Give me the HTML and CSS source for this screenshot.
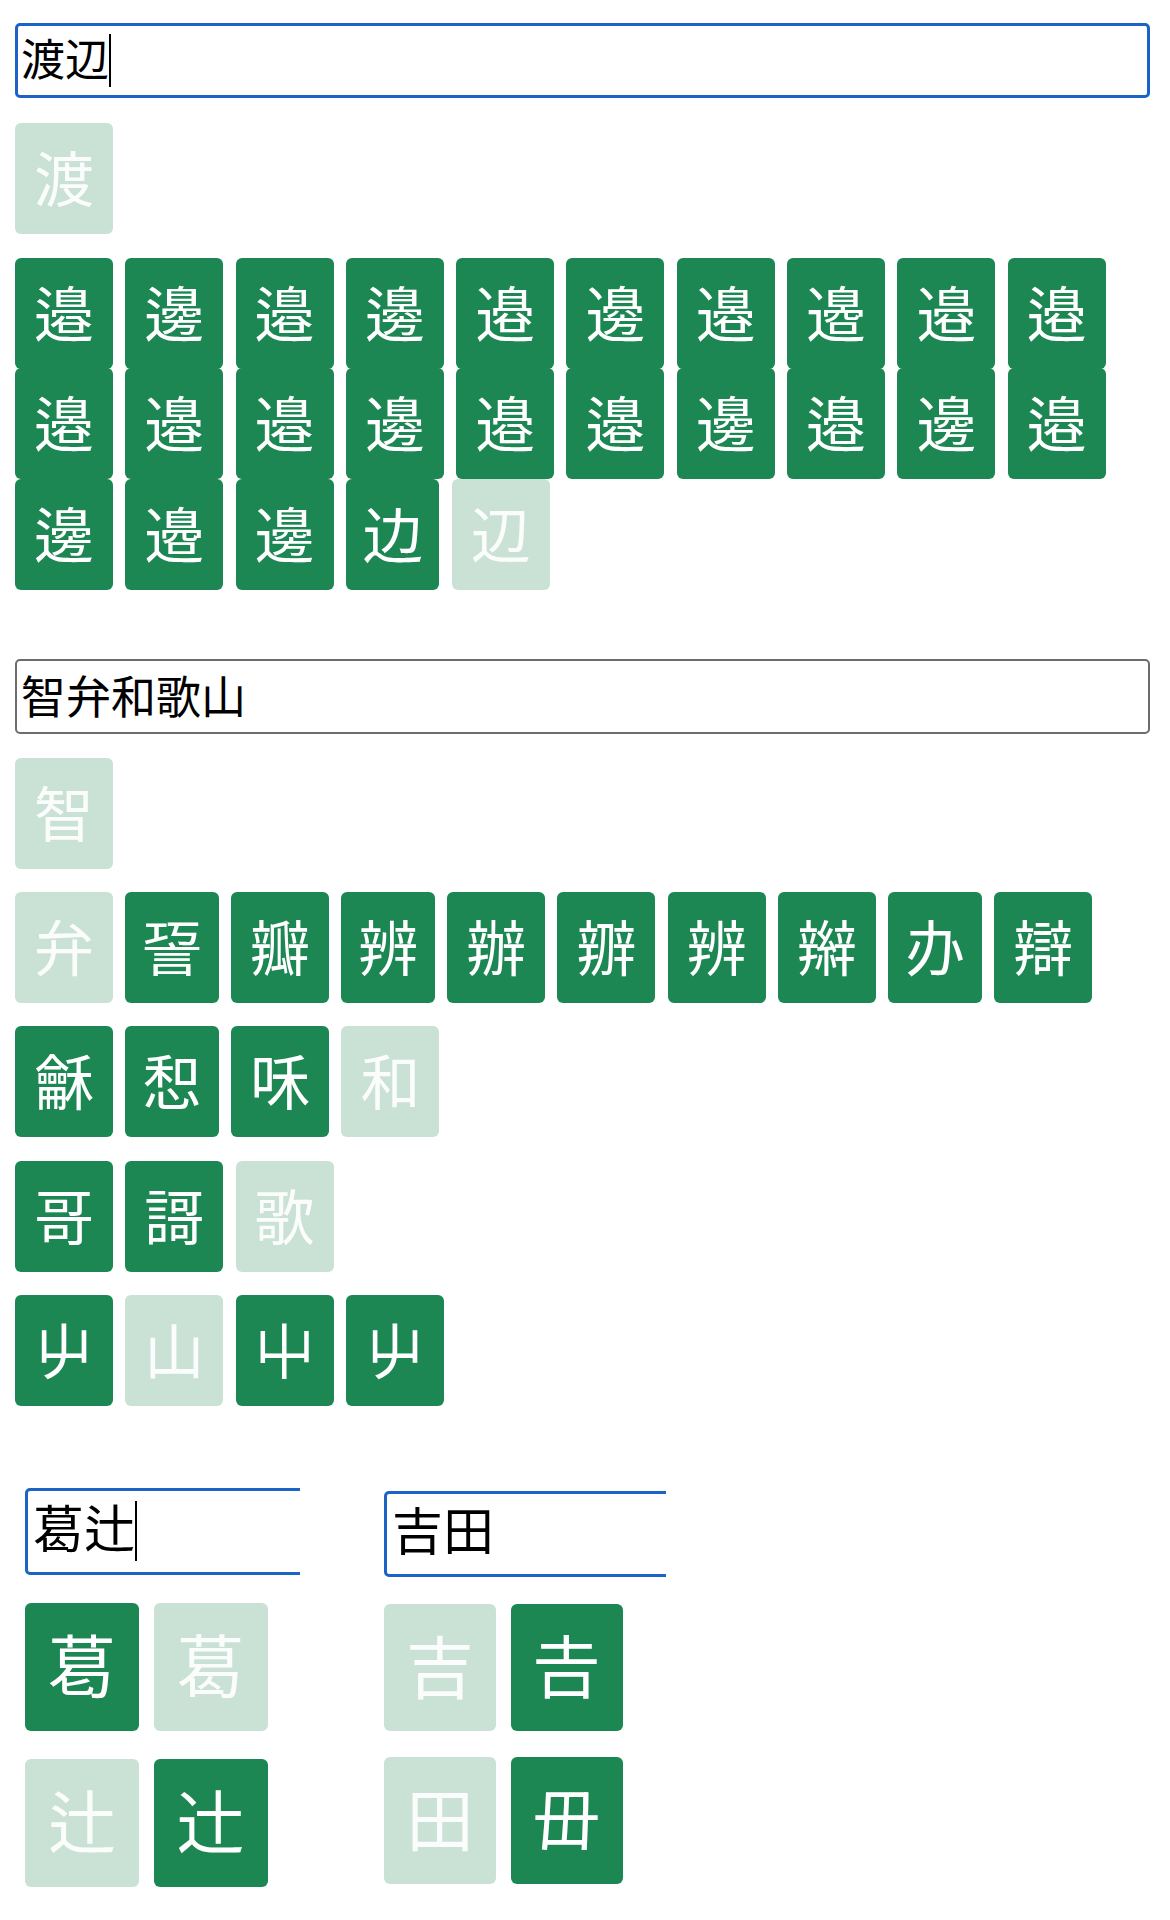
FILE: index.html
```html
<!DOCTYPE html>
<html lang="ja">
<head>
<meta charset="utf-8">
<title>異体字</title>
<link rel="stylesheet" href="styles.css">
</head>
<body>
<div class="page">
  <section class="sec s1">
    <div class="field focus"><span class="txt">渡辺</span><span class="caret"></span></div>
    <div class="group first"><span class="tile off">渡</span></div>
    <div class="group tight">
      <span class="tile">邉&#xE0100;</span><span class="tile">邊&#xE0100;</span><span class="tile">邉&#xE0101;</span><span class="tile">邊&#xE0101;</span><span class="tile">邉&#xE0102;</span><span class="tile">邊&#xE0102;</span><span class="tile">邉&#xE0103;</span><span class="tile">邉&#xE0104;</span><span class="tile">邉&#xE0105;</span><span class="tile">邉&#xE0106;</span>
      <span class="tile">邉&#xE0107;</span><span class="tile">邉&#xE0108;</span><span class="tile">邉&#xE0109;</span><span class="tile">邊&#xE0103;</span><span class="tile">邉&#xE010A;</span><span class="tile">邉&#xE010B;</span><span class="tile">邊&#xE0104;</span><span class="tile">邉&#xE010C;</span><span class="tile">邊&#xE0105;</span><span class="tile">邉&#xE010D;</span>
      <span class="tile">邊&#xE0106;</span><span class="tile">邉&#xE010E;</span><span class="tile">邊&#xE0107;</span><span class="tile n">边</span><span class="tile off">辺</span>
    </div>
  </section>

  <section class="sec s2">
    <div class="field"><span class="txt">智弁和歌山</span></div>
    <div class="group first"><span class="tile off">智</span></div>
    <div class="group">
      <span class="tile off">弁</span><span class="tile n">䛒</span><span class="tile">瓣</span><span class="tile n">辨</span><span class="tile">辦</span><span class="tile">辧</span><span class="tile">辨</span><span class="tile">辮</span><span class="tile n">办</span><span class="tile">辯</span>
    </div>
    <div class="group">
      <span class="tile">龢</span><span class="tile n">惒</span><span class="tile">咊</span><span class="tile off">和</span>
    </div>
    <div class="group">
      <span class="tile">哥</span><span class="tile">謌</span><span class="tile off">歌</span>
    </div>
    <div class="group">
      <span class="tile">屮</span><span class="tile off">山</span><span class="tile">⼬</span><span class="tile">屮</span>
    </div>
  </section>

  <section class="s3">
    <div class="col c1">
      <div class="field big focus"><span class="txt">葛辻</span><span class="caret"></span></div>
      <div class="group"><span class="tile">葛&#xE0100;</span><span class="tile off">葛</span></div>
      <div class="group"><span class="tile off">辻</span><span class="tile">辻&#xE0100;</span></div>
    </div>
    <div class="col c2">
      <div class="field big focus"><span class="txt">吉田</span></div>
      <div class="group"><span class="tile off">吉</span><span class="tile">𠮷</span></div>
      <div class="group"><span class="tile off">田</span><span class="tile">毌</span></div>
    </div>
  </section>
</div>
</body>
</html>
```

FILE: styles.css
```css
html, body {
  margin: 0;
  background: #ffffff;
}

body {
  font-family: "Noto Sans CJK JP", "Noto Sans CJK SC", sans-serif;
  color: #000;
}

.page {
  padding: 23px 20px 0 15px;
}

/* text fields */
.field {
  box-sizing: border-box;
  height: 75px;
  border: 2px solid #6c6c6c;
  border-radius: 5px;
  display: flex;
  align-items: center;
  padding: 0 0 4px 4px;
  font-size: 45px;
  background: #fff;
  white-space: nowrap;
  overflow: hidden;
}

.field.focus {
  border: 3px solid #1b63c6;
  padding: 0 0 6px 3px;
  font-size: 44px;
}

.txt {
  line-height: 45px;
}

.caret {
  flex: none;
  width: 2px;
  height: 53px;
  margin-top: 5px;
  background: #000;
}

/* tile groups */
.group {
  display: flex;
  flex-wrap: wrap;
  column-gap: 12.3px;
  margin-top: 24px;
}

.s1 .group.first {
  margin-top: 25px;
}

.group.tight .tile {
  margin-bottom: -0.7px;
}

.s2 .group {
  margin-top: 23.25px;
}

.s2 .group.first {
  margin-top: 24px;
}

.tile {
  box-sizing: border-box;
  width: 98px;
  height: 111px;
  padding-bottom: 6px;
  line-height: 105px;
  text-align: center;
  font-size: 60px;
  color: #ffffff;
  background: #1d8753;
  border-radius: 6px;
  white-space: nowrap;
}

.tile.n {
  width: 93.5px;
}

.tile.off {
  background: #cae1d6;
  color: rgba(255, 255, 255, 0.92);
}

/* sections */
.s2 {
  margin-top: 70px;
}

.s3 {
  display: flex;
  column-gap: 84px;
  margin-top: 82px;
  padding-left: 10px;
}

.col {
  overflow: hidden;
}

.c1 {
  width: 275px;
}

.c2 {
  width: 282px;
}

.field.big {
  width: 400px;
  height: 87px;
  font-size: 51px;
  padding: 0 0 10px 5px;
}

.field.big .txt {
  line-height: 51px;
}

.field.big .caret {
  height: 60px;
  margin-top: 9px;
}

.c2 .field.big {
  height: 86px;
  margin-top: 3px;
}

.s3 .group {
  column-gap: 14.5px;
  margin-top: 28px;
}

.s3 .tile {
  width: 114px;
  height: 128px;
  line-height: 120px;
  padding-bottom: 8px;
  font-size: 68px;
}

.c2 .group {
  margin-top: 27px;
}

.c2 .group + .group {
  margin-top: 26px;
}

.c2 .tile {
  width: 112px;
  height: 127px;
}
```
